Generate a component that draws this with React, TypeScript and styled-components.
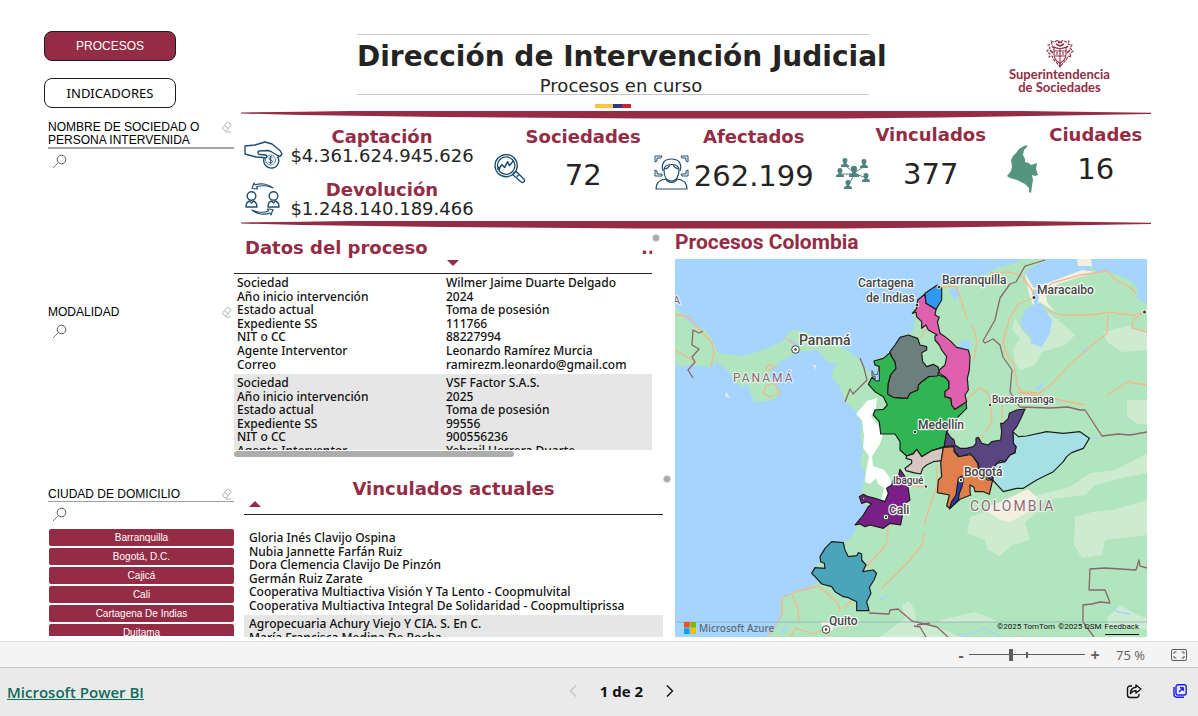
import React from "react";
import styled, { createGlobalStyle, css } from "styled-components";

const wine = "#942c45";
const navy = "#1d4e6f";
const ink = "#252423";

const GlobalStyle = createGlobalStyle`
  *, *::before, *::after { box-sizing: border-box; }
  body { margin: 0; background: #fff; color: ${ink}; font-family: "DejaVu Sans", Verdana, sans-serif; }
  h1, h2, h3, p, ul { margin: 0; padding: 0; }
  ul { list-style: none; }
  button, input { font: inherit; }
  button { cursor: pointer; }
`;

const Page = styled.div`
  min-height: 100vh;
  display: flex;
  flex-direction: column;
`;

const Report = styled.main`
  display: grid;
  grid-template-columns: 234px minmax(0, 1fr);
  height: 637px;
  margin-bottom: 4px;
  overflow: hidden;
`;

/* ---------- sidebar ---------- */

const Sidebar = styled.aside`
  padding: 31px 0 0 48px;
  font-family: "Liberation Sans", Arial, sans-serif;
  color: #000;
  min-height: 0;
`;

const Nav = styled.nav`
  display: flex;
  flex-direction: column;
  gap: 17px;
  width: 132px;
  margin: 0 0 12px -4px;
`;

const NavButton = styled.button<{ $active?: boolean }>`
  height: 30px;
  border: 1px solid #1c1c1c;
  border-radius: 8px;
  padding: 0;
  font-size: 13px;
  background: #fff;
  color: #000;
  font-family: "Noto Sans", sans-serif;
  ${(p) =>
    p.$active &&
    css`
      background: ${wine};
      color: #fff;
      font-size: 12px;
      font-family: "Liberation Sans", Arial, sans-serif;
    `}
`;

const Filter = styled.section<{ $height: number }>`
  height: ${(p) => p.$height}px;
  overflow: hidden;
`;

const FilterHead = styled.div<{ $rule: number }>`
  display: flex;
  justify-content: space-between;
  align-items: flex-start;
  padding: 1px 2px 0 0;
  border-bottom: ${(p) => p.$rule}px solid #a0a3a3;
`;

const FilterTitle = styled.h3`
  font-size: 12px;
  line-height: 13px;
  font-weight: 400;
  width: 160px;
`;

const GhostButton = styled.button`
  display: flex;
  align-items: center;
  justify-content: center;
  border: 0;
  padding: 0;
  background: none;
  color: inherit;
`;

const SearchBox = styled.label`
  display: flex;
  align-items: center;
  gap: 6px;
  height: 24px;
  padding-left: 4px;
`;

const SearchInput = styled.input`
  flex: 1;
  min-width: 0;
  border: 0;
  outline: 0;
  background: none;
  font-size: 12px;
`;

const CityList = styled.ul`
  display: flex;
  flex-direction: column;
  gap: 2px;
  padding: 3px 0 0 1px;
`;

const CityButton = styled.button`
  display: block;
  width: 100%;
  height: 17px;
  border: 0;
  border-radius: 2px;
  padding: 0;
  background: ${wine};
  color: #fff;
  font-size: 10px;
  line-height: 17px;
`;

/* ---------- header ---------- */

const Content = styled.div`
  display: flex;
  flex-direction: column;
  min-width: 0;
`;

const Header = styled.header`
  display: grid;
  grid-template-columns: minmax(0, 123fr) 528px minmax(0, 313fr);
  padding-top: 34px;
  height: 111px;
`;

const TitleBlock = styled.div`
  grid-column: 2;
  text-align: center;
`;

const Rule = styled.div`
  width: 512px;
  height: 1px;
  background: #c8c8c8;
`;

const Title = styled.h1`
  padding-top: 2px;
  font-size: 28px;
  line-height: 40px;
  font-weight: 700;
  white-space: nowrap;
`;

const Subtitle = styled.p`
  font-size: 18px;
  line-height: 17px;
`;

const Flag = styled.div`
  width: 36px;
  height: 4px;
  margin: 9px 0 0 238px;
  background: linear-gradient(90deg, #f7c640 50%, #2b3a85 50% 75%, #c9252f 75%);
`;

const Brand = styled.div`
  display: flex;
  flex-direction: column;
  align-items: center;
  padding: 5px 0 0 36px;
  color: ${wine};
  font: 700 13px/13px Lato, sans-serif;
  text-align: center;
`;

const Band = styled.svg`
  display: block;
  width: calc(100% - 54px);
  height: 8px;
  margin-left: 7px;
`;

/* ---------- indicators ---------- */

const Kpis = styled.section`
  display: grid;
  grid-template-columns: 237fr 146fr 169fr 159fr 136fr;
  gap: 13px;
  height: 102px;
  margin: 0 55px 0 10px;
`;

const KpiStack = styled.div`
  display: flex;
  flex-direction: column;
  gap: 11px;
  padding-top: 8px;
`;

const MoneyRow = styled.div`
  display: flex;
  align-items: flex-start;
  gap: 6px;
`;

const MoneyText = styled.div`
  text-align: center;
  line-height: 19px;
  font-size: 18px;
  width: 184px;
`;

const KpiTitle = styled.h2`
  font-size: 18px;
  line-height: 19px;
  color: ${wine};
  white-space: nowrap;
`;

const Kpi = styled.div<{ $top: number; $gap?: number }>`
  display: flex;
  gap: ${(p) => p.$gap ?? 0}px;
  padding-top: ${(p) => p.$top}px;
`;

const KpiIcon = styled.div<{ $top: number }>`
  display: flex;
  flex: none;
  align-items: flex-start;
  padding-top: ${(p) => p.$top}px;
`;

const KpiText = styled.div<{ $gap: number }>`
  display: flex;
  flex-direction: column;
  align-items: center;
  gap: ${(p) => p.$gap}px;
`;

const KpiValue = styled.p`
  font-size: 29px;
  line-height: 36px;
`;

/* ---------- panels ---------- */

const Panels = styled.div`
  display: grid;
  grid-template-columns: minmax(0, 441fr) minmax(0, 472fr);
  margin-right: 51px;
  flex: 1;
  min-height: 0;
`;

const Tables = styled.div`
  display: flex;
  flex-direction: column;
  justify-content: space-between;
  min-height: 0;
`;

const Panel = styled.section<{ $inset?: boolean }>`
  display: grid;
  grid-template-columns: minmax(0, 1fr) 8px;
  align-items: start;
  margin: ${(p) => (p.$inset ? "0 4px 0 10px" : "5px 15px 0 0")};
`;

const Handle = styled.span`
  width: 8px;
  height: 8px;
  border-radius: 50%;
  background: #a8a8a8;
  border: 1px solid #dadada;
`;

const PanelHead = styled.div`
  height: 40px;
  border-bottom: 1px solid ${ink};
`;

const PanelTitle = styled.h2<{ $center?: boolean }>`
  display: flex;
  justify-content: ${(p) => (p.$center ? "center" : "space-between")};
  padding: 4px 0 0 ${(p) => (p.$center ? 0 : 11)}px;
  font-size: 18px;
  line-height: 20px;
  color: ${wine};
`;

const More = styled.span`
  width: 11px;
  overflow: hidden;
`;

const Sort = styled.span<{ $down?: boolean }>`
  display: block;
  width: 0;
  border: 6px solid transparent;
  ${(p) =>
    p.$down
      ? css`
          border-top-color: ${wine};
          border-bottom: 0;
          margin: 2px 0 0 51%;
        `
      : css`
          border-bottom-color: ${wine};
          border-top: 0;
          margin: 2px 0 0 5px;
        `}
`;

const Scroll = styled.div<{ $height: number; $top?: number }>`
  height: ${(p) => p.$height}px;
  padding-top: ${(p) => p.$top ?? 0}px;
  overflow: hidden;
`;

const Table = styled.table`
  width: 100%;
  border-collapse: collapse;
  table-layout: fixed;
  color: #111;
  font: 500 12px/13px "Noto Sans", sans-serif;
`;

const Group = styled.tbody<{ $shade?: boolean; $pad: number }>`
  background: ${(p) => (p.$shade ? "#e6e6e6" : "none")};
  td {
    height: 13px;
    padding: 0 0 0 ${(p) => p.$pad}px;
    white-space: nowrap;
  }
  tr:nth-child(even) td { height: 14px; }
  tr:first-child td { height: 15px; padding-top: 1px; }
  tr:last-child td { height: 17px; padding-bottom: 3px; }
`;

const ScrollBar = styled.div`
  width: 67%;
  height: 6px;
  margin-top: 1px;
  border-radius: 3px;
  background: #adadad;
`;

const MapPanel = styled.section`
  display: flex;
  flex-direction: column;
  min-width: 0;
`;

const MapTitle = styled.h2`
  height: 30px;
  color: ${wine};
  font: 700 21px/26px Roboto, sans-serif;
`;

const MapFrame = styled.div`
  position: relative;
  flex: 1;
  min-height: 0;
  overflow: hidden;
`;

const MapSvg = styled.svg`
  display: block;
  width: 100%;
  height: 100%;
`;

const Credit = styled.p`
  position: absolute;
  right: 8px;
  bottom: 2px;
  display: flex;
  gap: 3px;
  font: 8px/14px Roboto, sans-serif;
  color: #111;
  a { color: inherit; text-decoration: none; border-bottom: 1px solid #111; }
`;

const AzureMark = styled.p`
  position: absolute;
  left: 9px;
  bottom: 3px;
  display: flex;
  align-items: center;
  gap: 3px;
  color: #5f6b75;
  font: 500 10px/12px "Noto Sans", sans-serif;
`;

/* ---------- bottom bars ---------- */

const StatusBar = styled.div`
  display: flex;
  align-items: center;
  justify-content: flex-end;
  height: 27px;
  padding-right: 10px;
  border-top: 1px solid #dedede;
  border-bottom: 1px solid #c6c6c6;
  background: #f4f4f4;
  color: #605e5c;
  font-family: "Open Sans", sans-serif;
`;

const ZoomStep = styled(GhostButton)`
  width: 16px;
  height: 20px;
  font-size: 16px;
  font-weight: 700;
`;

const ZoomRange = styled.input`
  appearance: none;
  width: 116px;
  height: 12px;
  margin: 0 2px 0 0;
  background:
    linear-gradient(#605e5c, #605e5c) 57px 50% / 2px 6px no-repeat,
    linear-gradient(#605e5c, #605e5c) 0 50% / 100% 1px no-repeat;
  &::-webkit-slider-thumb {
    appearance: none;
    width: 4px;
    height: 12px;
    background: #605e5c;
  }
`;

const ZoomValue = styled.span`
  width: 56px;
  padding-left: 13px;
  font-size: 13px;
  white-space: nowrap;
`;

const FitButton = styled(GhostButton)`
  width: 18px;
  height: 18px;
  margin-left: 11px;
`;

const Footer = styled.footer`
  flex: 1;
  display: flex;
  justify-content: space-between;
  align-items: flex-start;
  padding: 13px 11px 0 7px;
  min-height: 42px;
  background: #eaeaea;
  font-family: "Open Sans", sans-serif;
  line-height: 20px;
`;

const BrandLink = styled.a`
  color: #0f6b5c;
  font-size: 15px;
  font-weight: 600;
  line-height: 22px;
`;

const Pager = styled.div`
  display: flex;
  align-items: center;
  gap: 23px;
  color: #111;
  font-size: 15px;
  font-weight: 700;
`;

const Actions = styled.div`
  display: flex;
  justify-content: flex-end;
  gap: 31px;
  width: 88px;
  height: 20px;
`;

/* ---------- icons ---------- */

const Eraser = () => (
  <svg width="10" height="12" viewBox="0 0 10 12" fill="none" stroke="#b5b5b5">
    <path d="M5.5 1 9 3.5 5 9.5 3 10 .8 8 .8 6.5 5.5 1ZM2.4 4.7 6.4 7.6M4 11h5" />
  </svg>
);

const Lens = () => (
  <svg width="15" height="15" viewBox="0 0 15 15" fill="none" stroke="#555">
    <circle cx="9.5" cy="5.5" r="4.3" />
    <path d="M6.4 8.6 1 14" stroke="#8a7358" />
  </svg>
);

const HandCoin = () => (
  <svg width="40" height="28" viewBox="0 0 40 28" fill="none" stroke={navy} strokeWidth="1.4" strokeLinejoin="round">
    <path d="M19 16.500 12 16 1 13V5L11 4 21 1 28 3 36 9.500 38 13 36 15.500 33.500 14.500 27 10.500 24 9.500 15 10C13 11 14 13.500 16 13.500L22 14C24 15.500 22.500 18 19 16.500Z" />
    <path d="M20 17.500A7.500 7.500 0 1 0 33.500 15.500" />
    <circle cx="26.500" cy="19" r="5" strokeWidth=".7" />
    <path d="M28.500 16.500C27 15 24.500 16 25 18 25.500 19.500 28.500 18.500 28.500 20.500 28 22.500 25.500 22 24.500 21M26.700 15v8" strokeWidth="1" />
  </svg>
);

const PeopleCycle = () => (
  <svg width="40" height="34" viewBox="-1 0 40 34" fill="none" stroke={navy} strokeWidth="1.4" strokeLinejoin="round">
    <circle cx="6.500" cy="14" r="4.300" />
    <circle cx="28.500" cy="14" r="4.300" />
    <path d="M1 25C1 21 3 19.500 4.500 19L6.500 21 8.500 19C11 20 12 22 12 25ZM23 25C23 21 25 19.500 26.500 19L28.500 21 30.500 19C33 20 34 22 34 25Z" />
    <path d="M28 6C23 1.500 15 1 10 3L9 1 7 6.500 12.500 7 11.500 5C16 3 23 3.500 28 6ZM7 28C12 32.500 20 33 25 31L26 33 28 27.500 22.500 27 23.500 29C19 31 12 30.500 7 28Z" strokeWidth="1.100" />
  </svg>
);

const LensChart = () => (
  <svg width="32" height="30" viewBox="0 0 33 31" fill="none" stroke={navy} strokeWidth="1.400" strokeLinejoin="round">
    <circle cx="12.500" cy="12" r="11.500" />
    <circle cx="12.500" cy="12" r="9" />
    <path d="M5 15 8 11 11 14 14 8 16 12 20 7" strokeWidth="1.600" />
    <circle cx="5" cy="15" r="1" />
    <path d="M20 20 23 18 31 26C32.500 28 30 30.500 28 29L20 22ZM23.500 23.500 26 21" />
  </svg>
);

const FaceScan = () => (
  <svg width="35" height="35" viewBox="0 0 35 35" fill="none" stroke={navy} strokeWidth="1.200" strokeLinejoin="round">
    <path d="M1 7V1H8L7 3H3V6ZM27 1H34V7L32 6V3H28ZM1 15 3 16V19H8V21H1ZM34 15 32 16V19L27 19 28 21H34Z" strokeWidth="1" />
    <path d="M9 16C6.500 8 11 4 17.500 4S28.500 8 26 16" />
    <path d="M10 15C10 11 13 9.500 17.500 9.500S25 11 25 15C25 22 22 26 17.500 26S10 22 10 15ZM10 14C13 14 15 12 16 9.500M25 14C22 13.500 20 12 19 9.500" />
    <path d="M2 34C2 27 7 24.500 12 24 14 28.500 21 28.500 23 24 28 24.500 33 27 33 34Z" />
  </svg>
);

const persons: [number, number, number][] = [
  [9, 1, 1], [28, 2, 1], [4, 11, 1], [18, 9, 1.25], [30, 16, 1], [12, 23, 1],
];

const Network = () => (
  <svg width="34" height="33" viewBox="0 0 34 33" fill="#50827f">
    <path d="M10 8 17 14M27 9 20 14M6 16H17M30 20 20 16M13 26 18 17" stroke="#50827f" />
    {persons.map(([x, y, s]) => (
      <path
        key={`${x}-${y}`}
        transform={`translate(${x} ${y}) scale(${s})`}
        d="M0-1C3-1 3 2 1.500 4V5C4 5.500 4 6 4 8H-4C-4 6-4 5.500-1.500 5V4C-3 2-3-1 0-1Z"
      />
    ))}
  </svg>
);

const ColombiaShape = () => (
  <svg width="31" height="48" viewBox="0 0 31 48" fill="#559580">
    <path d="M20 0 20 2 17 5 16 10 18 14 18 17 22 18 24 20 30 18 29 24 31 30 28 31 25 30 26 35 25 41 24 48 22 47 22 43 18 39 14 37 10 35 3 33 0 31 4 26 5 21 4 15 6 11 9 8 12 4 17 1Z" />
  </svg>
);

const Crest = () => (
  <svg width="28" height="29" viewBox="0 0 28 29" fill="none" stroke={wine} strokeWidth="1.100" strokeLinejoin="round">
    <path d="M11 1.500 14 3 17 1.500 20 3 23 2 22 5 26 6 24 9 27 12 24 15 25 18 22 17 20 21 17 24 14 28 11 24 8 21 6 17 3 18 4 15 1 12 4 9 2 6 6 5 5 2 8 3Z" strokeDasharray="3 1" />
    <path d="M8 8C11 10 17 10 20 8V15C20 19 18 22 14 24 10 22 8 19 8 15ZM8.500 12H19.500M9 17H19M14 10V23M11 13V16M17 13V16" />
    <path d="M10 5 14 7 18 5M4 11 7 14M24 11 21 14M6 7 8 9M22 7 20 9M12 3.500H16M14 24V28" strokeWidth="1.600" />
  </svg>
);

const Stroke = () => (
  <Band viewBox="0 0 910 8" preserveAspectRatio="none" aria-hidden>
    <path d="M0 1.500 60 .7 110 0H780L910 1.800V3L700 6.500 600 7.500H400L200 6 60 4 0 2.500Z" fill={wine} />
  </Band>
);

/* ---------- map ---------- */

type Pin = { x: number; y: number; r: number };
const pins: Pin[] = [
  { x: 795.5, y: 349.5, r: 3 }, { x: 939, y: 287, r: 1.500 }, { x: 917, y: 305, r: 1.500 },
  { x: 1034, y: 297.5, r: 1.500 }, { x: 990, y: 405, r: 1.200 }, { x: 915, y: 432, r: 1.200 },
  { x: 961, y: 480, r: 2 }, { x: 926, y: 486.5, r: 1.200 }, { x: 886, y: 517, r: 2 },
  { x: 826, y: 629.5, r: 3 }, { x: 1144.5, y: 312, r: 1.500 },
];

type Label = { x: number; y: number; size: number; text: string; country?: boolean };
const labels: Label[] = [
  { x: 799, y: 345, size: 14, text: "Panamá" },
  { x: 858, y: 287, size: 12, text: "Cartagena" },
  { x: 866, y: 302, size: 12, text: "de Indias" },
  { x: 942, y: 284, size: 12, text: "Barranquilla" },
  { x: 1037, y: 294, size: 12, text: "Maracaibo" },
  { x: 992, y: 403, size: 10, text: "Bucaramanga" },
  { x: 918, y: 429, size: 12, text: "Medellín" },
  { x: 964, y: 476, size: 12, text: "Bogotá" },
  { x: 893, y: 484, size: 10, text: "Ibagué" },
  { x: 889, y: 514, size: 12, text: "Cali" },
  { x: 829, y: 625, size: 12, text: "Quito" },
  { x: 733, y: 382, size: 12, text: "PANAMÁ", country: true },
  { x: 970, y: 511, size: 14, text: "COLOMBIA", country: true },
  { x: 673, y: 304, size: 11, text: "A", country: true },
];

const third = "scale(.33333)";

const ProcessMap = () => (
  <MapSvg viewBox="675 259 472 378" preserveAspectRatio="xMidYMid slice" role="img" aria-label="Mapa de procesos en Colombia">
    <rect x="375" y="159" width="1100" height="600" fill="#a5d4ff" />
    <path
      fill="#b1e5bd"
      d="M375 300 675 306 683 316 695 327 705 330 713 340 717 352 730 355 742 356 757 352 770 347 785 340 787 333 793 330 807 332 817 338 837 345 850 352 860 360 870 373 875 379 878 367 875 360 880 358 892 352 897 345 903 335 912 333 915 320 912 313 917 303 925 293 937 285 963 285 977 278 997 268 1017 262 1033 255 1045 260 1025 272 1027 283 1032 290 1042 287 1057 280 1077 275 1092 272 1090 265 1077 262 1077 259 1088 259 1096 273 1107 271 1117 275 1130 280 1137 287 1137 297 1145 303 1475 310V759H375L767 637 777 627 782 617 780 610 782 598 792 593 807 588 818 583 812 572 820 563 822 553 832 542 843 543 852 537 857 525 867 507 860 497 862 490 865 473 860 463 863 450 860 433 862 427 857 412 845 402 840 387 832 377 833 368 838 364 828 362 817 350 798 352 783 360 773 367 768 377 775 383 780 395 770 401 755 402 750 393 748 382 743 388 733 380 730 373 717 362 710 367 690 365 680 367 675 363H375Z"
    />
    {/* lighter plains */}
    <g fill="#ccebd1">
      <path d="M1015 318 1012 330 1020 338 1013 350 1015 362 1020 370 1035 365 1042 352 1065 345 1075 335 1058 320 1045 310 1035 345 1022 330ZM1103 332 1127 326 1147 331V350L1122 352 1107 342ZM1127 400 1147 400V424L1137 424 1127 416ZM970 517 985 512 995 506 1030 502 1037 495 1070 487 1090 473 1115 470 1147 454V473L1122 478 1095 485 1085 495 1045 500 1040 510 1025 522 1030 540 1012 545 1000 556 988 550 985 540 967 533ZM1075 517 1092 512 1112 510 1147 500V535L1105 540 1102 555 1082 558 1074 545ZM1107 618 1120 605 1137 615 1147 618V629H1107ZM902 605 909 601 915 610 916 622 905 620ZM903 620 925 624 945 630 960 637H880ZM940 620 975 612 1000 622H940ZM895 480 900 470 908 468 905 480Z" />
    </g>
    <g fill="#f4efe1">
      <path d="M987 507 1000 502 1028 489 1037 497 1032 510 1010 522 1001 520 988 512ZM1025 273 1034 288 1042 285 1082 270 1097 272 1080 277 1058 284 1045 290 1047 302 1055 312 1040 302 1034 308 1030 297 1027 285ZM1077 259H1091L1092 266 1078 266ZM820 622H833V630L826 633ZM726 392 730 398 725 396ZM813 364 816 366 815 370Z" />
    </g>
    <path
      fill="#fff"
      d="M867 401 877 398 876 408 871 416 880 428 884 431 880 444 872 456 873 466 884 470 890 478 893 488 886 500 881 500 884 488 878 484 876 478 870 484 865 482 866 472 869 456 863 448 864 436 862 420 856 414Z"
    />
    <g fill="#a5d4ff">
      <path d="M1036 302 1042 305 1052 320 1050 333 1042 347 1030 343 1032 338 1022 328 1021 321 1025 310 1033 305ZM1032 290 1040 289 1038 303 1034 303ZM948 290 957 287 960 294 955 301ZM958 345 963 340 971 341 970 350 962 352ZM1035 388 1045 381 1040 390ZM1081 352 1088 346 1085 354ZM790 338 799 345 795 347 788 341ZM780 632 790 620 783 634Z" />
    </g>
    <g fill="none" stroke="#a5d4ff" strokeWidth="1.500">
      <path d="M1110 606 1118 612 1130 614M960 637 985 628 1000 637M1087 438 1100 438M880 600 888 595" />
    </g>
    {/* roads */}
    <g fill="none" stroke="#f4b78c" strokeWidth="1.300" strokeLinejoin="round">
      <path d="M675 314 690 318 700 330 712 343 714 353 711 367M675 350 687 357 694 361M783 337 792 342 797 350 790 350M765 369 770 364 776 367 767 370M766 386 774 383 780 393 770 397 763 393ZM942 287 956 286 961 300 967 319M926 310 928 325 921 338M972 325 977 340 974 360M990 273 1010 272 1022 276 1032 290 1034 298 1018 304 1009 320 1003 342 1008 358 1014 363 1017 385 1022 392 1040 393 1052 384 1068 366 1107 333 1108 315M1042 293 1052 283 1080 275 1107 271 1117 281 1130 287 1136 294M1047 310 1060 315 1090 315 1112 312 1120 314 1135 315 1144 312 1133 320 1132 328 1147 332M1017 392 1060 400 1085 405M1107 395 1127 382 1147 385M966 400 980 388 988 393 991 405 992 422 985 432M1002 400V420M978 445 983 435M937 465V485L931 503 924 525M910 486 926 487M924 532 922 545 910 560 895 575 882 588M889 520 886 545 866 567M782 598 795 592 818 586 827 593 838 603 840 611M792 594 798 608 799 622M845 607 852 600M782 598 782 615 767 637M790 637 796 628 812 634 826 629 830 637M853 620 846 630" />
      <path d="M848 590 860 604M905 400 915 392M1012 637 1022 636" opacity=".6" />
    </g>
    {/* borders */}
    <g fill="none" stroke="#8b666c" strokeWidth="1.300" strokeLinejoin="round">
      <path d="M703 331 699 333 693 330 692 345 699 349 692 357 695 362 688 370 693 378M860 358 864 368 867 380 860 387 853 394 850 389 845 402M1045 260 1032 264 1025 266 1016 282 1010 284 1000 298 995 320 983 341 985 343 993 339 1000 345 1003 357 1012 370 1010 392 1020 407 1050 408 1068 407 1080 410 1085 410 1102 436 1118 434 1130 435 1147 432M869 613 889 614 890 610 898 609 912 621 925 624 937 627 948 637M1147 568 1140 566 1139 560 1136 570 1105 568 1090 569 1089 590 1105 590 1109 600 1110 603 1100 602 1092 604 1083 605 1083 622 1094 637M914 626 920 627 926 637" />
      <path d="M917 625 930 623" />
    </g>
    <path d="M675 622H1147" stroke="#8ea6b8" strokeWidth=".7" />
    {/* departments */}
    <g stroke="#1c1c1c" strokeWidth="3.500" strokeLinejoin="round">
      <g transform={`translate(850 250) ${third}`}>
        <path fill="#31b553" d="M120 308 125 320 135 335 138 355 122 375 115 400 113 432 130 442 172 445 180 430 203 420 205 405 215 395 235 380 265 375 285 382 297 395 297 415 285 425 285 440 303 445 305 465 315 478 348 455 350 475 325 500 290 545 283 590 245 602 215 620 200 598 190 610 170 618 150 600 150 575 135 552 92 552 88 515 70 495 75 480 100 478 112 465 100 440 75 425 55 403 66 382 80 392 88 392 88 350 75 345 72 333 100 325Z" />
        <path fill="#a5d4ff" strokeWidth="2" d="M66 362 72 375 82 373 88 350V392H75L76 380 66 378Z" />
        <path fill="#6d7f7b" d="M150 262 175 255 188 260 203 265 210 285 230 290V300L215 308 218 335 230 350 250 343 265 352 267 362 262 378 235 380 215 395 205 405 203 420 180 430 172 445 130 442 113 432 115 400 122 375 138 355 135 335 125 320 120 305 135 285Z" />
        <path fill="#e060b0" d="M203 150 225 132 228 160 258 178 255 195 268 202 262 215 270 250 285 260 300 272 320 292 355 300 360 320 358 360 352 385 355 420 345 435 350 455 315 478 305 465 303 445 285 440V425L297 415V395L285 380 267 370 268 360 285 345 290 320 275 300 268 285 255 270V258L262 255 235 240 228 225 215 235V215L200 200 198 186 187 190 200 175Z" />
        <path fill="#2f98f0" d="M225 130 262 105 275 115V150L258 178 228 160Z" />
      </g>
      <g transform={`translate(850 400) ${third}`}>
        <path fill="#d7c5c0" d="M200 148 215 170 245 152 280 142 275 182 250 185 230 195 218 205 212 222 190 218 168 212 165 205 185 190V180L168 175 170 168 190 162Z" />
        <path fill="#a6e0e7" d="M428 240 430 205 440 190 465 185 480 165 495 158 498 140 490 130 488 95 505 110 530 108 590 95 640 100 690 95 718 115 700 145 665 158 650 170 640 185 610 215 560 240 520 265 500 265 460 275Z" />
        <path fill="#5b4580" d="M290 95 283 140 310 137 315 155 330 172 360 160 385 190 388 210 415 235 428 240 430 205 440 190 450 182 465 185 480 165 495 158 498 140 490 130V110L488 95 500 80 515 50 525 27 500 30 478 40 475 55 460 70H452L455 95 452 120 425 125 415 135 395 130 385 112 378 115V130L370 140 350 145H330L315 135 312 120 300 110Z" />
        <path fill="#df7f4b" d="M280 142 312 140V155L325 170 355 165H365L383 190 385 205 412 240 428 240 418 283 400 275 375 275 372 262 360 255V275L362 285 330 298 300 325 290 318 298 285 262 278 265 240 275 230 272 190Z" />
        <path fill="#2540a4" d="M325 235 335 228 340 240 335 262 328 280 325 300 298 327 305 305 318 285 322 255Z" />
        <path fill="#791f87" d="M150 208 165 230 172 250 180 300 165 310 160 330 152 375 120 370 100 385 80 380 60 375 45 380 30 372 15 375 40 345 55 320 65 312 50 305 35 310 28 290 40 283 55 290 75 295 105 305 115 280 110 265 125 255 130 240 145 230Z" />
        <path fill="#b1e5bd" strokeWidth="2" d="M36 295 46 291 42 300Z" />
      </g>
      <g transform={`translate(670 430) ${third}`}>
        <path fill="#4aa4ba" d="M485 335 520 338 525 360 535 380 560 377 565 368 575 372V390L588 405 578 425 610 420 620 430 612 450 598 472 603 490 590 515 597 542H560V515L535 503 520 500 495 485 485 470 455 462 440 445 425 430 435 413 465 415 463 400 452 395 450 380 465 355Z" />
      </g>
    </g>
    {pins.map((p) => (
      <g key={`${p.x}-${p.y}`}>
        <circle cx={p.x} cy={p.y} r={p.r + 0.8} fill="#fff" stroke="#444" strokeWidth={p.r > 1.6 ? 1 : 0} />
        <circle cx={p.x} cy={p.y} r={p.r > 1.6 ? 1.2 : p.r} fill="#333" />
      </g>
    ))}
    <g fontFamily="Roboto, sans-serif" paintOrder="stroke" stroke="#fff" strokeWidth="2.500" strokeLinejoin="round">
      {labels.map((l) => (
        <text
          key={l.text}
          x={l.x}
          y={l.y}
          fontSize={l.size}
          fontWeight={l.country ? 400 : 500}
          fill={l.country ? "#8d6a70" : "#454545"}
          strokeOpacity={l.country ? 0.6 : 0.9}
          letterSpacing={l.country ? 2 : 0}
        >
          {l.text}
        </text>
      ))}
    </g>
  </MapSvg>
);

/* ---------- data ---------- */

const cities = ["Barranquilla", "Bogotá, D.C.", "Cajicá", "Cali", "Cartagena De Indias", "Duitama"];

const fields = ["Sociedad", "Año inicio intervención", "Estado actual", "Expediente SS", "NIT o CC", "Agente Interventor", "Correo"];

const processes = [
  ["Wilmer Jaime Duarte Delgado", "2024", "Toma de posesión", "111766", "88227994", "Leonardo Ramírez Murcia", "ramirezm.leonardo@gmail.com"],
  ["VSF Factor S.A.S.", "2025", "Toma de posesión", "99556", "900556236", "Yebrail Herrera Duarte"],
];

const linked = [
  [
    "Gloria Inés Clavijo Ospina",
    "Nubia Jannette Farfán Ruiz",
    "Dora Clemencia Clavijo De Pinzón",
    "Germán Ruiz Zarate",
    "Cooperativa Multiactiva Visión Y Ta Lento - Coopmulvital",
    "Cooperativa Multiactiva Integral De Solidaridad - Coopmultiprissa",
  ],
  ["Agropecuaria Achury Viejo Y CIA. S. En C.", "María Francisca Medina De Rocha"],
];

type FilterBlockProps = { title: string; height: number; rule: number; children?: React.ReactNode };

const FilterBlock = ({ title, height, rule, children }: FilterBlockProps) => (
  <Filter $height={height}>
    <FilterHead $rule={rule}>
      <FilterTitle>{title}</FilterTitle>
      <GhostButton aria-label={`Borrar ${title}`}><Eraser /></GhostButton>
    </FilterHead>
    <SearchBox>
      <Lens />
      <SearchInput type="text" aria-label={`Buscar ${title}`} />
    </SearchBox>
    {children}
  </Filter>
);

export default function App() {
  return (
    <Page>
      <GlobalStyle />
      <Report>
        <Sidebar>
          <Nav>
            <NavButton $active>PROCESOS</NavButton>
            <NavButton>INDICADORES</NavButton>
          </Nav>
          <FilterBlock title="NOMBRE DE SOCIEDAD O PERSONA INTERVENIDA" height={185} rule={2} />
          <FilterBlock title="MODALIDAD" height={182} rule={0} />
          <FilterBlock title="CIUDAD DE DOMICILIO" height={149} rule={1}>
            <CityList>
              {cities.map((c) => (
                <li key={c}><CityButton>{c}</CityButton></li>
              ))}
            </CityList>
          </FilterBlock>
        </Sidebar>

        <Content>
          <Header>
            <TitleBlock>
              <Rule />
              <Title>Dirección de Intervención Judicial</Title>
              <Subtitle>Procesos en curso</Subtitle>
              <Rule />
              <Flag />
            </TitleBlock>
            <Brand>
              <Crest />
              <span>Superintendencia<br />de Sociedades</span>
            </Brand>
          </Header>

          <Stroke />
          <Kpis>
            <KpiStack>
              <MoneyRow>
                <KpiIcon $top={14}><HandCoin /></KpiIcon>
                <MoneyText>
                  <KpiTitle>Captación</KpiTitle>
                  <p>$4.361.624.945.626</p>
                </MoneyText>
              </MoneyRow>
              <MoneyRow>
                <KpiIcon $top={2}><PeopleCycle /></KpiIcon>
                <MoneyText>
                  <KpiTitle>Devolución</KpiTitle>
                  <p>$1.248.140.189.466</p>
                </MoneyText>
              </MoneyRow>
            </KpiStack>
            <Kpi $top={8}>
              <KpiIcon $top={27}><LensChart /></KpiIcon>
              <KpiText $gap={11}>
                <KpiTitle>Sociedades</KpiTitle>
                <KpiValue>72</KpiValue>
              </KpiText>
            </Kpi>
            <Kpi $top={8} $gap={5}>
              <KpiIcon $top={28}><FaceScan /></KpiIcon>
              <KpiText $gap={12}>
                <KpiTitle>Afectados</KpiTitle>
                <KpiValue>262.199</KpiValue>
              </KpiText>
            </Kpi>
            <Kpi $top={6} $gap={6}>
              <KpiIcon $top={33}><Network /></KpiIcon>
              <KpiText $gap={12}>
                <KpiTitle>Vinculados</KpiTitle>
                <KpiValue>377</KpiValue>
              </KpiText>
            </Kpi>
            <Kpi $top={6} $gap={11}>
              <KpiIcon $top={20}><ColombiaShape /></KpiIcon>
              <KpiText $gap={7}>
                <KpiTitle>Ciudades</KpiTitle>
                <KpiValue>16</KpiValue>
              </KpiText>
            </Kpi>
          </Kpis>
          <Stroke />

          <Panels>
            <Tables>
              <Panel>
                <div>
                  <PanelHead>
                    <PanelTitle>Datos del proceso<More>..</More></PanelTitle>
                    <Sort $down />
                  </PanelHead>
                  <Scroll $height={176}>
                    <Table>
                      {processes.map((values, g) => (
                        <Group key={values[0]} $shade={g === 1} $pad={3}>
                          {values.map((v, i) => (
                            <tr key={fields[i]}>
                              <td>{fields[i]}</td>
                              <td>{v}</td>
                            </tr>
                          ))}
                        </Group>
                      ))}
                    </Table>
                  </Scroll>
                  <ScrollBar />
                </div>
                <Handle />
              </Panel>
              <Panel $inset>
                <div>
                  <PanelHead>
                    <PanelTitle $center>Vinculados actuales</PanelTitle>
                    <Sort />
                  </PanelHead>
                  <Scroll $height={122} $top={14}>
                    <Table>
                      {linked.map((names, g) => (
                        <Group key={names[0]} $shade={g === 1} $pad={5}>
                          {names.map((n) => (
                            <tr key={n}><td>{n}</td></tr>
                          ))}
                        </Group>
                      ))}
                    </Table>
                  </Scroll>
                </div>
                <Handle />
              </Panel>
            </Tables>
            <MapPanel>
              <MapTitle>Procesos Colombia</MapTitle>
              <MapFrame>
                <ProcessMap />
                <AzureMark>
                  <svg width="12" height="12" viewBox="0 0 12 12">
                    <path fill="#f25022" d="M0 0h5.700v5.700H0z" />
                    <path fill="#7fba00" d="M6.300 0H12v5.700H6.300z" />
                    <path fill="#00a4ef" d="M0 6.300h5.700V12H0z" />
                    <path fill="#ffb900" d="M6.300 6.300H12V12H6.300z" />
                  </svg>
                  Microsoft Azure
                </AzureMark>
                <Credit>
                  <span>©2025 TomTom</span>
                  <span>©2025 OSM</span>
                  <a href="#feedback">Feedback</a>
                </Credit>
              </MapFrame>
            </MapPanel>
          </Panels>
        </Content>
      </Report>

      <StatusBar>
        <ZoomStep aria-label="Alejar">-</ZoomStep>
        <ZoomRange type="range" min={0} max={100} defaultValue={36} aria-label="Zoom" />
        <ZoomStep aria-label="Acercar">+</ZoomStep>
        <ZoomValue>75 %</ZoomValue>
        <FitButton aria-label="Ajustar a la página">
          <svg width="16" height="12" viewBox="0 0 16 12" fill="none" stroke="#605e5c">
            <rect x=".5" y=".5" width="15" height="11" rx="1.500" />
            <path d="M3 5V3H5.500M10.500 3H13V5M13 7V9H10.500M5.500 9H3V7" />
          </svg>
        </FitButton>
      </StatusBar>
      <Footer>
        <BrandLink href="#powerbi">Microsoft Power BI</BrandLink>
        <Pager>
          <GhostButton aria-label="Página anterior">
            <svg width="8" height="12" viewBox="0 0 8 12" fill="none" stroke="#c2c2c2" strokeWidth="1.200"><path d="M7 .5 1.500 6 7 11.500" /></svg>
          </GhostButton>
          <span>1 de 2</span>
          <GhostButton aria-label="Página siguiente">
            <svg width="8" height="12" viewBox="0 0 8 12" fill="none" stroke="#111" strokeWidth="1.400"><path d="M1 .5 6.500 6 1 11.500" /></svg>
          </GhostButton>
        </Pager>
        <Actions>
          <GhostButton aria-label="Compartir">
            <svg width="16" height="15" viewBox="0 0 16 15" fill="none" stroke="#111" strokeWidth="1.400" strokeLinejoin="round">
              <path d="M6 2H4A2.500 2.500 0 0 0 1.500 4.500V11A2.500 2.500 0 0 0 4 13.500H10.500A2.500 2.500 0 0 0 13 11V10" />
              <path d="M10 1 15 5 10 9V6.800C7.500 6.500 6 7.500 4.500 9.500 4.500 6 6.500 3.600 10 3.300Z" />
            </svg>
          </GhostButton>
          <GhostButton aria-label="Abrir en ventana nueva">
            <svg width="14" height="14" viewBox="0 0 14 14" fill="none" stroke="#1a1aff" strokeWidth="1.400" strokeLinejoin="round">
              <rect x="3" y=".8" width="10.200" height="10.200" rx="2" />
              <path d="M1 3V10.500A2.700 2.700 0 0 0 3.500 13.200H11M6 8 10 4M7 3.800H10.200V7" />
            </svg>
          </GhostButton>
        </Actions>
      </Footer>
    </Page>
  );
}
